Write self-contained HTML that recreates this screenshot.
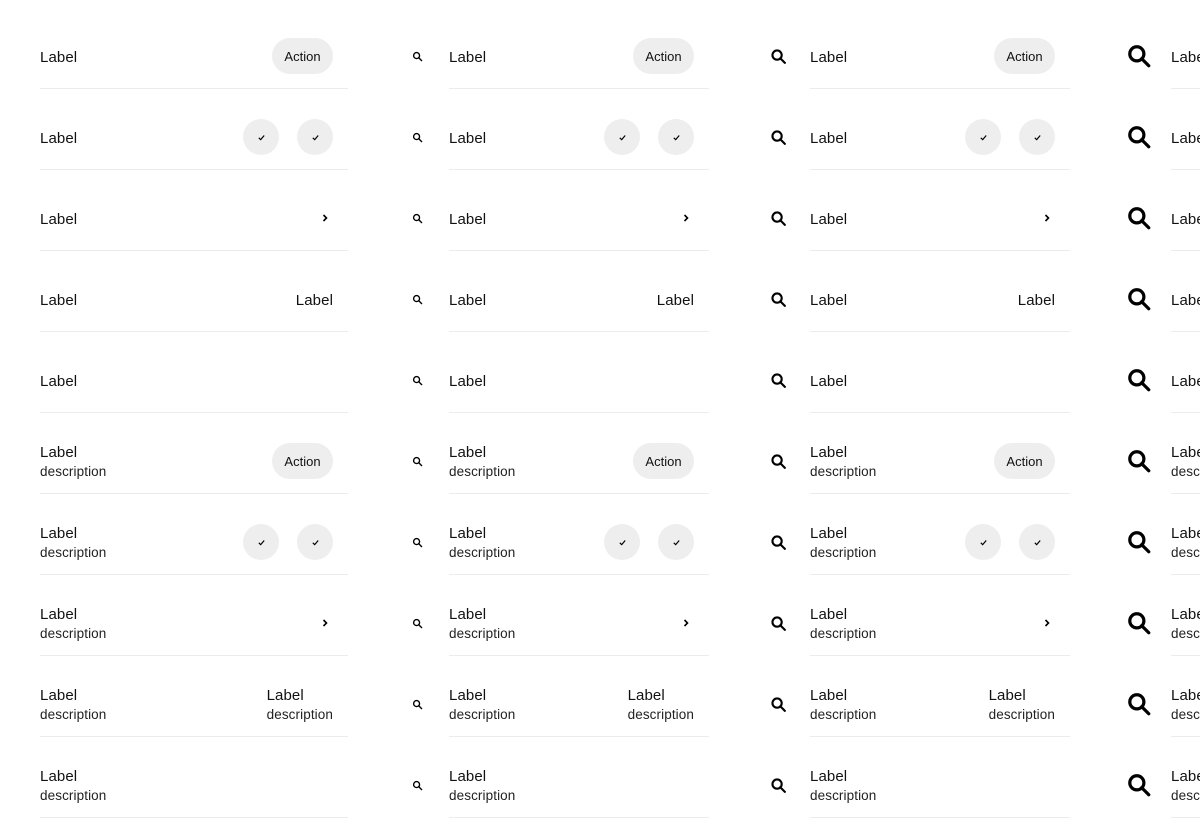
<!DOCTYPE html>
<html><head><meta charset="utf-8"><style>
html,body{margin:0;padding:0;width:1200px;height:800px;overflow:hidden;background:#fff;font-family:"Liberation Sans",Arial,sans-serif;color:#111}
.col{position:absolute;top:8px}
.row{position:relative;height:64px;padding-top:16px;border-bottom:1px solid #ececec;display:flex;align-items:center;box-sizing:content-box}
.ic{position:absolute;top:16px;height:64px;display:flex;align-items:center;justify-content:center;width:30px}
.t{flex:1}
.l{font-size:15px;line-height:19px;letter-spacing:0.1px}
.row>.t>.l:only-child{margin-top:2px}
.d{font-size:13.5px;line-height:17px;color:#222;margin-top:1px;letter-spacing:0.1px}
.r{margin-right:15px;display:flex;align-items:center}
.r>.l{margin-top:2px}
.pill{width:61px;height:36px;border-radius:18px;background:#eee;font-size:13px;display:flex;align-items:center;justify-content:center}
.c{width:36px;height:36px;border-radius:50%;background:#eee;display:flex;align-items:center;justify-content:center}
.c+.c{margin-left:18px}
.ch{width:16px;display:flex;justify-content:center;margin-right:0}
</style></head><body>
<svg width="0" height="0" style="position:absolute"><defs>
<symbol id="s" viewBox="0 0 24 24"><circle cx="10" cy="10" r="6.5" fill="none" stroke="#000" stroke-width="3"/><path d="M14.5 14.5L21 21" stroke="#000" stroke-width="3" stroke-linecap="round"/></symbol>
<symbol id="k" viewBox="0 0 10 10"><path d="M2 5.4L4.1 7.4L8 2.8" fill="none" stroke="#000" stroke-width="1.3"/></symbol>
<symbol id="v" viewBox="0 0 10 10"><path d="M3.5 2L6.5 5L3.5 8" fill="none" stroke="#000" stroke-width="1.6"/></symbol>
</defs></svg>

<div class="col" style="left:40px;width:308px">
<div class="row"><div class="t"><div class="l">Label</div></div><div class="r"><div class="pill">Action</div></div></div>
<div class="row"><div class="t"><div class="l">Label</div></div><div class="r"><div class="c"><svg width="9" height="9"><use href="#k"/></svg></div><div class="c"><svg width="9" height="9"><use href="#k"/></svg></div></div></div>
<div class="row"><div class="t"><div class="l">Label</div></div><div class="r"><div class="ch"><svg width="10" height="10"><use href="#v"/></svg></div></div></div>
<div class="row"><div class="t"><div class="l">Label</div></div><div class="r"><div class="l">Label</div></div></div>
<div class="row"><div class="t"><div class="l">Label</div></div></div>
<div class="row"><div class="t"><div class="l">Label</div><div class="d">description</div></div><div class="r"><div class="pill">Action</div></div></div>
<div class="row"><div class="t"><div class="l">Label</div><div class="d">description</div></div><div class="r"><div class="c"><svg width="9" height="9"><use href="#k"/></svg></div><div class="c"><svg width="9" height="9"><use href="#k"/></svg></div></div></div>
<div class="row"><div class="t"><div class="l">Label</div><div class="d">description</div></div><div class="r"><div class="ch"><svg width="10" height="10"><use href="#v"/></svg></div></div></div>
<div class="row"><div class="t"><div class="l">Label</div><div class="d">description</div></div><div class="r"><div><div class="l">Label</div><div class="d">description</div></div></div></div>
<div class="row"><div class="t"><div class="l">Label</div><div class="d">description</div></div></div>
</div>

<div class="col" style="left:449px;width:260px">
<div class="row"><div class="ic" style="left:-47px"><svg width="11" height="11"><use href="#s"/></svg></div><div class="t"><div class="l">Label</div></div><div class="r"><div class="pill">Action</div></div></div>
<div class="row"><div class="ic" style="left:-47px"><svg width="11" height="11"><use href="#s"/></svg></div><div class="t"><div class="l">Label</div></div><div class="r"><div class="c"><svg width="9" height="9"><use href="#k"/></svg></div><div class="c"><svg width="9" height="9"><use href="#k"/></svg></div></div></div>
<div class="row"><div class="ic" style="left:-47px"><svg width="11" height="11"><use href="#s"/></svg></div><div class="t"><div class="l">Label</div></div><div class="r"><div class="ch"><svg width="10" height="10"><use href="#v"/></svg></div></div></div>
<div class="row"><div class="ic" style="left:-47px"><svg width="11" height="11"><use href="#s"/></svg></div><div class="t"><div class="l">Label</div></div><div class="r"><div class="l">Label</div></div></div>
<div class="row"><div class="ic" style="left:-47px"><svg width="11" height="11"><use href="#s"/></svg></div><div class="t"><div class="l">Label</div></div></div>
<div class="row"><div class="ic" style="left:-47px"><svg width="11" height="11"><use href="#s"/></svg></div><div class="t"><div class="l">Label</div><div class="d">description</div></div><div class="r"><div class="pill">Action</div></div></div>
<div class="row"><div class="ic" style="left:-47px"><svg width="11" height="11"><use href="#s"/></svg></div><div class="t"><div class="l">Label</div><div class="d">description</div></div><div class="r"><div class="c"><svg width="9" height="9"><use href="#k"/></svg></div><div class="c"><svg width="9" height="9"><use href="#k"/></svg></div></div></div>
<div class="row"><div class="ic" style="left:-47px"><svg width="11" height="11"><use href="#s"/></svg></div><div class="t"><div class="l">Label</div><div class="d">description</div></div><div class="r"><div class="ch"><svg width="10" height="10"><use href="#v"/></svg></div></div></div>
<div class="row"><div class="ic" style="left:-47px"><svg width="11" height="11"><use href="#s"/></svg></div><div class="t"><div class="l">Label</div><div class="d">description</div></div><div class="r"><div><div class="l">Label</div><div class="d">description</div></div></div></div>
<div class="row"><div class="ic" style="left:-47px"><svg width="11" height="11"><use href="#s"/></svg></div><div class="t"><div class="l">Label</div><div class="d">description</div></div></div>
</div>

<div class="col" style="left:810px;width:260px">
<div class="row"><div class="ic" style="left:-47px"><svg width="17" height="17"><use href="#s"/></svg></div><div class="t"><div class="l">Label</div></div><div class="r"><div class="pill">Action</div></div></div>
<div class="row"><div class="ic" style="left:-47px"><svg width="17" height="17"><use href="#s"/></svg></div><div class="t"><div class="l">Label</div></div><div class="r"><div class="c"><svg width="9" height="9"><use href="#k"/></svg></div><div class="c"><svg width="9" height="9"><use href="#k"/></svg></div></div></div>
<div class="row"><div class="ic" style="left:-47px"><svg width="17" height="17"><use href="#s"/></svg></div><div class="t"><div class="l">Label</div></div><div class="r"><div class="ch"><svg width="10" height="10"><use href="#v"/></svg></div></div></div>
<div class="row"><div class="ic" style="left:-47px"><svg width="17" height="17"><use href="#s"/></svg></div><div class="t"><div class="l">Label</div></div><div class="r"><div class="l">Label</div></div></div>
<div class="row"><div class="ic" style="left:-47px"><svg width="17" height="17"><use href="#s"/></svg></div><div class="t"><div class="l">Label</div></div></div>
<div class="row"><div class="ic" style="left:-47px"><svg width="17" height="17"><use href="#s"/></svg></div><div class="t"><div class="l">Label</div><div class="d">description</div></div><div class="r"><div class="pill">Action</div></div></div>
<div class="row"><div class="ic" style="left:-47px"><svg width="17" height="17"><use href="#s"/></svg></div><div class="t"><div class="l">Label</div><div class="d">description</div></div><div class="r"><div class="c"><svg width="9" height="9"><use href="#k"/></svg></div><div class="c"><svg width="9" height="9"><use href="#k"/></svg></div></div></div>
<div class="row"><div class="ic" style="left:-47px"><svg width="17" height="17"><use href="#s"/></svg></div><div class="t"><div class="l">Label</div><div class="d">description</div></div><div class="r"><div class="ch"><svg width="10" height="10"><use href="#v"/></svg></div></div></div>
<div class="row"><div class="ic" style="left:-47px"><svg width="17" height="17"><use href="#s"/></svg></div><div class="t"><div class="l">Label</div><div class="d">description</div></div><div class="r"><div><div class="l">Label</div><div class="d">description</div></div></div></div>
<div class="row"><div class="ic" style="left:-47px"><svg width="17" height="17"><use href="#s"/></svg></div><div class="t"><div class="l">Label</div><div class="d">description</div></div></div>
</div>

<div class="col" style="left:1171px;width:261px">
<div class="row"><div class="ic" style="left:-47px"><svg width="26" height="26"><use href="#s"/></svg></div><div class="t"><div class="l">Label</div></div></div>
<div class="row"><div class="ic" style="left:-47px"><svg width="26" height="26"><use href="#s"/></svg></div><div class="t"><div class="l">Label</div></div></div>
<div class="row"><div class="ic" style="left:-47px"><svg width="26" height="26"><use href="#s"/></svg></div><div class="t"><div class="l">Label</div></div></div>
<div class="row"><div class="ic" style="left:-47px"><svg width="26" height="26"><use href="#s"/></svg></div><div class="t"><div class="l">Label</div></div></div>
<div class="row"><div class="ic" style="left:-47px"><svg width="26" height="26"><use href="#s"/></svg></div><div class="t"><div class="l">Label</div></div></div>
<div class="row"><div class="ic" style="left:-47px"><svg width="26" height="26"><use href="#s"/></svg></div><div class="t"><div class="l">Label</div><div class="d">description</div></div></div>
<div class="row"><div class="ic" style="left:-47px"><svg width="26" height="26"><use href="#s"/></svg></div><div class="t"><div class="l">Label</div><div class="d">description</div></div></div>
<div class="row"><div class="ic" style="left:-47px"><svg width="26" height="26"><use href="#s"/></svg></div><div class="t"><div class="l">Label</div><div class="d">description</div></div></div>
<div class="row"><div class="ic" style="left:-47px"><svg width="26" height="26"><use href="#s"/></svg></div><div class="t"><div class="l">Label</div><div class="d">description</div></div></div>
<div class="row"><div class="ic" style="left:-47px"><svg width="26" height="26"><use href="#s"/></svg></div><div class="t"><div class="l">Label</div><div class="d">description</div></div></div>
</div>
</body></html>
